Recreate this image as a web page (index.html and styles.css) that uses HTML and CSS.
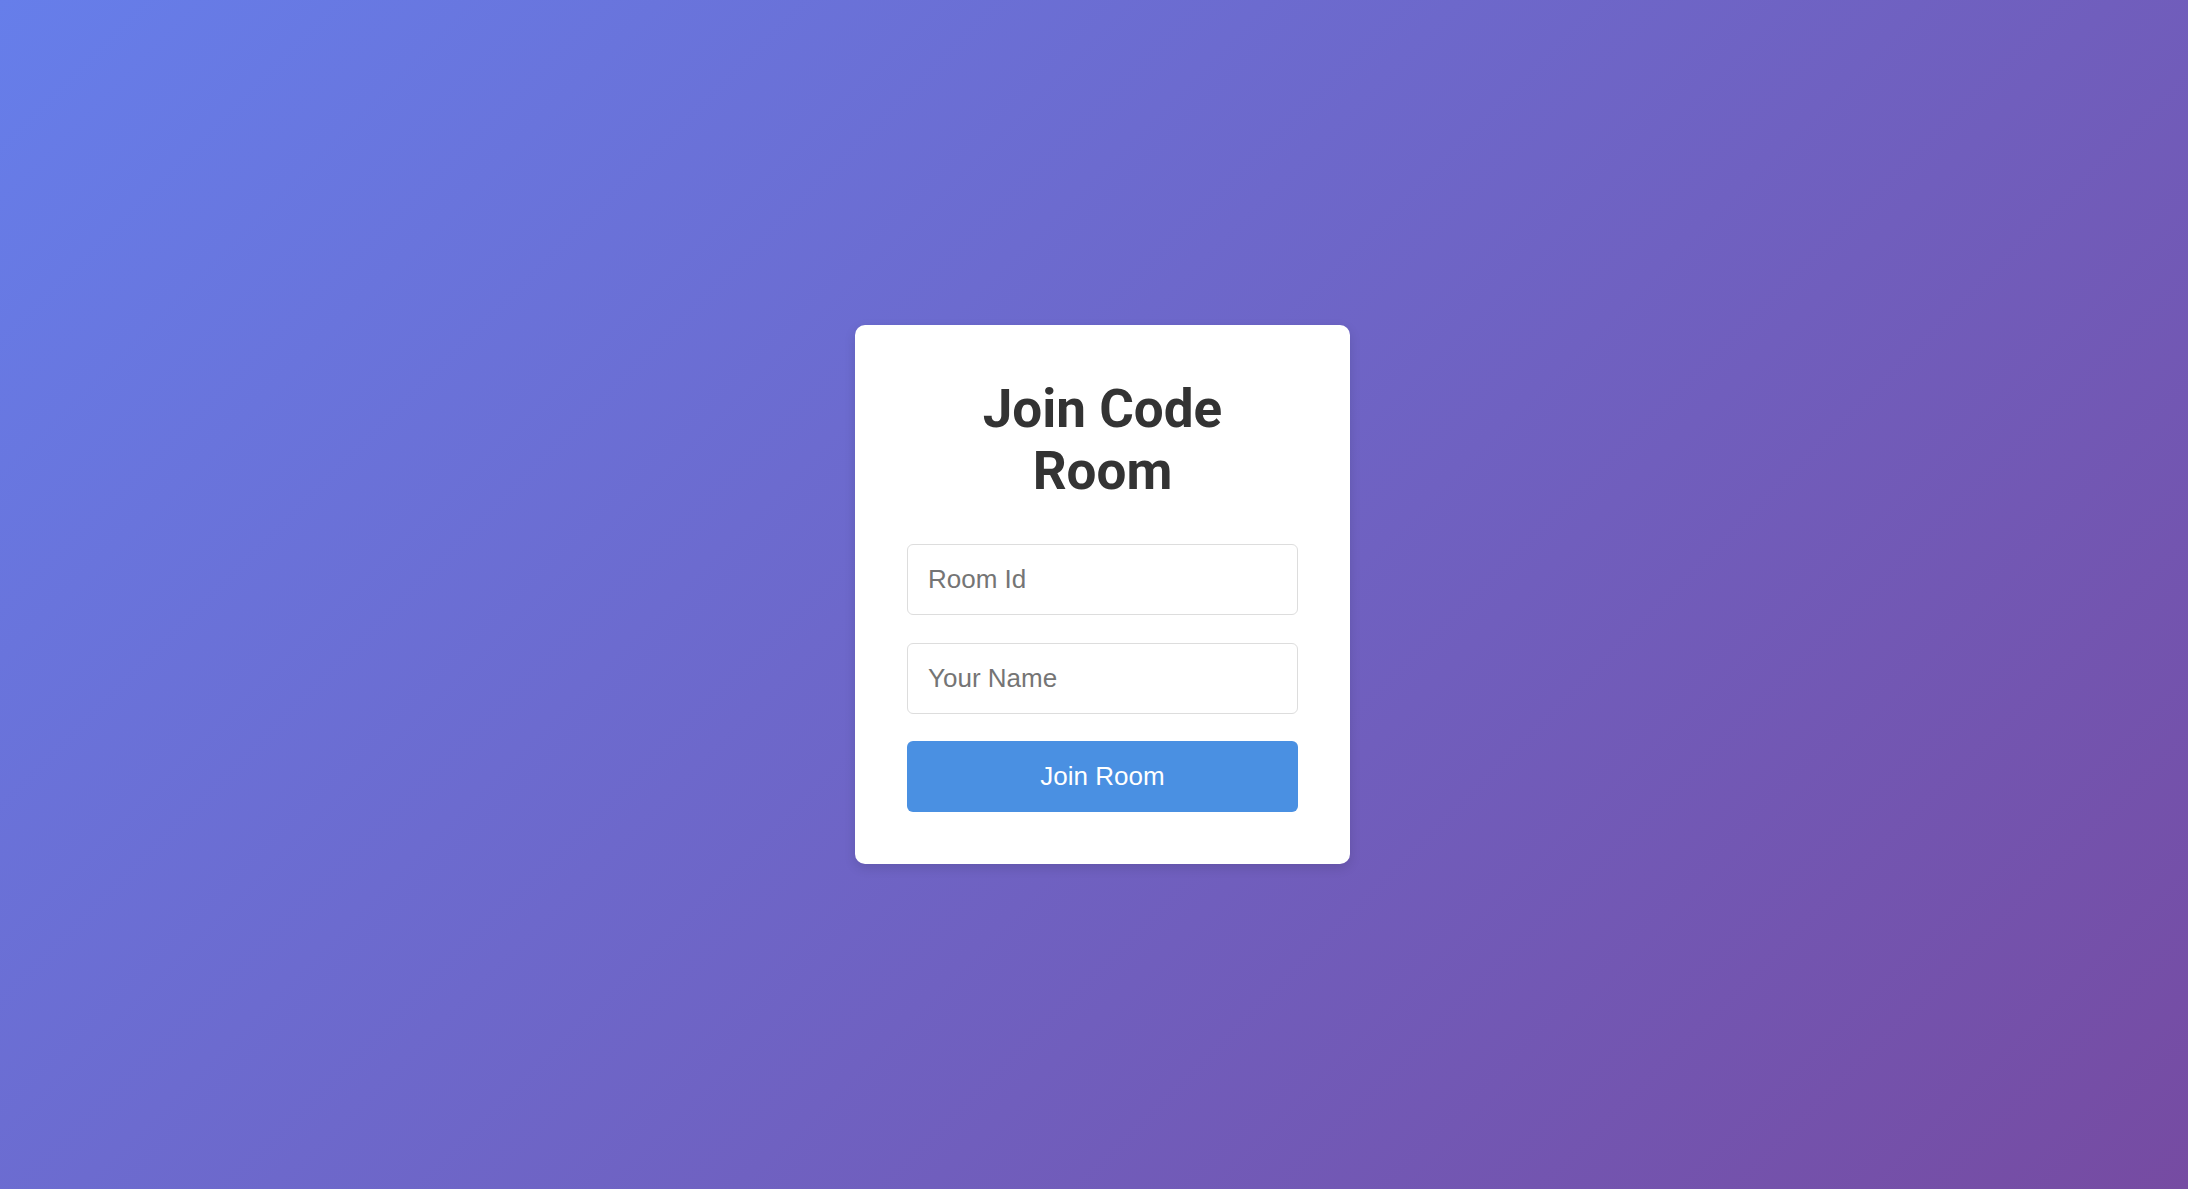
FILE: index.html
```html
<!DOCTYPE html>
<html lang="en">
<head>
<meta charset="utf-8">
<title>Join Code Room</title>
<link rel="stylesheet" href="styles.css">
</head>
<body>
<main class="page">
  <form class="card">
    <h1 class="title">Join Code Room</h1>
    <input class="field" type="text" placeholder="Room Id">
    <input class="field" type="text" placeholder="Your Name">
    <button class="join" type="button">Join Room</button>
  </form>
</main>
</body>
</html>
```

FILE: styles.css
```css
html, body {
  margin: 0;
  padding: 0;
  height: 100%;
}
body {
  background: linear-gradient(135deg, #667eea 0%, #764ba2 100%);
  font-family: "Liberation Sans", Arial, sans-serif;
}
.page {
  box-sizing: border-box;
  min-height: 100vh;
  display: flex;
  align-items: center;
  justify-content: center;
  padding-left: 17px;
}
.card {
  box-sizing: border-box;
  width: 495px;
  background: #fff;
  border-radius: 10px;
  padding: 53px 52px 52px;
  box-shadow: 0 4px 12px rgba(0, 0, 0, 0.12);
  display: flex;
  flex-direction: column;
}
.title {
  margin: 0 0 42px;
  font-family: Roboto, "Liberation Sans", sans-serif;
  font-weight: 700;
  font-size: 53px;
  line-height: 62px;
  color: #333;
  text-align: center;
  padding: 0 48px;
}
.field {
  box-sizing: border-box;
  height: 71px;
  width: 100%;
  border: 1px solid #ddd;
  border-radius: 6px;
  padding: 0 20px;
  font-family: "Liberation Sans", Arial, sans-serif;
  font-size: 26px;
  color: #333;
  margin: 0 0 28px;
  outline: none;
}
.field::placeholder {
  color: #757575;
}
.join {
  box-sizing: border-box;
  height: 71px;
  width: 100%;
  border: none;
  border-radius: 6px;
  background: #4a90e2;
  color: #fff;
  font-family: "Liberation Sans", Arial, sans-serif;
  font-size: 26px;
  margin-top: -1px;
  cursor: pointer;
}
```
